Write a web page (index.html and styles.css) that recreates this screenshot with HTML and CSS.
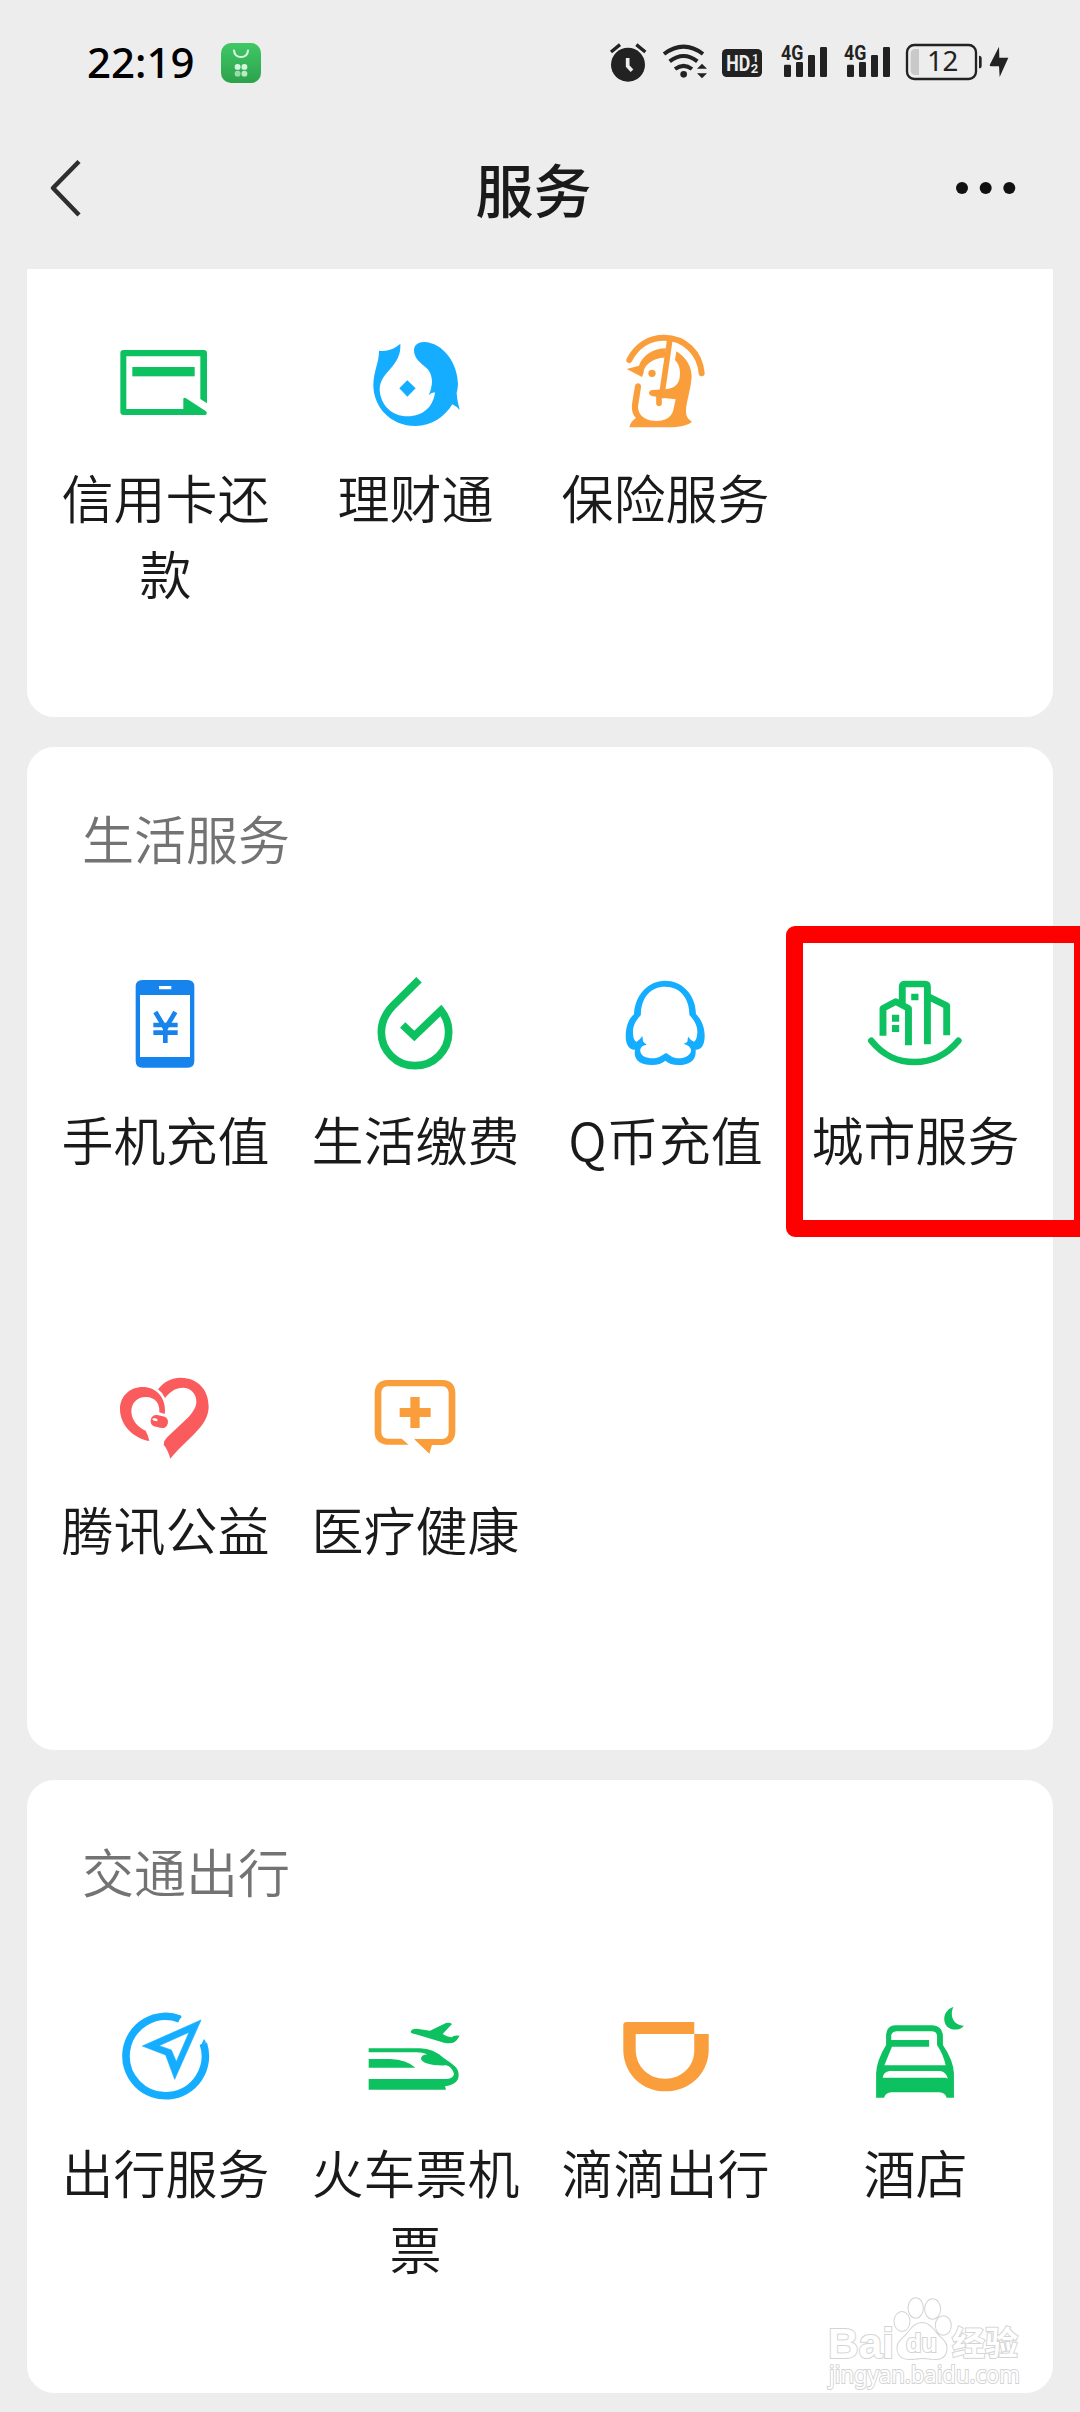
FILE: index.html
```html
<!DOCTYPE html>
<html lang="zh-CN">
<head>
<meta charset="utf-8">
<title>服务</title>
<link rel="stylesheet" href="styles.css">
</head>
<body>
<div class="page">
  <div class="statusbar">
    <span class="clock">22:19</span>
    <svg class="app-badge" width="40" height="40" viewBox="0 0 40 40">
      <defs><linearGradient id="badge" x1="0" y1="0" x2="0" y2="1"><stop offset="0" stop-color="#3fc866"/><stop offset="1" stop-color="#2ba24b"/></linearGradient></defs>
      <rect width="40" height="40" rx="10" fill="url(#badge)"/>
      <path d="M13 7.500C13.500 12 16 14 20 14S26.500 12 27 7.500" fill="none" stroke="#d9f5df" stroke-width="2.200" stroke-linecap="round"/>
      <g fill="#d3f5db"><rect x="13.700" y="21" width="5.800" height="5.800" rx="2.600"/><rect x="20.500" y="21" width="5.800" height="5.800" rx="2.600"/><rect x="13.700" y="27.800" width="5.800" height="5.800" rx="2.600" opacity=".65"/><rect x="20.500" y="27.800" width="5.800" height="5.800" rx="2.600" opacity=".85"/></g>
    </svg>
    <div class="indicators">
      <svg width="38" height="45" viewBox="87 120 114 135">
        <circle cx="144" cy="194" r="51"/><path d="M93 156l27-22M169 134l27 22" class="line" stroke-width="10"/>
        <path d="M143 174v24l13 14" class="line light" stroke-width="11"/>
      </svg>
      <svg width="43" height="45" viewBox="249 120 129 135">
        <path d="M252 162Q311 118 369 162M269 184Q311 152 352 184M285 207Q311 188 336 207" class="line" stroke-width="12"/>
        <circle cx="311" cy="223" r="10"/><path d="M351 206l15-15 15 15zM351 220h30l-15 15z"/>
      </svg>
      <svg width="43" height="45" viewBox="426 120 129 135">
        <rect x="426" y="147" width="120" height="84" rx="14"/>
        <text x="439" y="212" class="mini light-text" font-size="66" textLength="72" lengthAdjust="spacingAndGlyphs">HD</text>
        <text x="516" y="185" class="mini light-text" font-size="35">1</text><text x="512" y="220" class="mini light-text" font-size="39">2</text>
      </svg>
      <svg width="47" height="45" viewBox="603 120 141 135">
        <text x="603" y="180" class="mini" font-size="60" textLength="67" lengthAdjust="spacingAndGlyphs">4G</text>
        <rect x="612" y="194" width="21" height="37" rx="4"/><rect x="648" y="186" width="21" height="45" rx="4"/><rect x="684" y="165" width="21" height="66" rx="4"/><rect x="720" y="141" width="21" height="90" rx="4"/>
      </svg>
      <svg width="46" height="45" viewBox="603 120 138 135">
        <text x="603" y="180" class="mini" font-size="60" textLength="67" lengthAdjust="spacingAndGlyphs">4G</text>
        <rect x="612" y="194" width="21" height="37" rx="4"/><rect x="648" y="186" width="21" height="45" rx="4"/><rect x="684" y="165" width="21" height="66" rx="4"/><rect x="720" y="141" width="21" height="90" rx="4"/>
      </svg>
      <svg width="104" height="45" viewBox="978 120 312 135">
        <rect x="981" y="135" width="207" height="102" rx="22" class="line" stroke-width="7"/>
        <path d="M1017 147v78h-10q-15 0-15-15v-48q0-15 15-15z" fill="#c9c9c9"/>
        <text x="1041" y="214" class="charge" font-size="83" textLength="94">12</text>
        <path d="M1197 167q8 0 8 8v22q0 8-8 8zM1257 140l-28 55q0 4 5 4h23l2 32 26-58h-27z"/>
      </svg>
    </div>
  </div>

  <div class="navbar">
    <svg class="back" width="36" height="60" viewBox="0 0 36 60"><path d="M31 3.500L5 30l26 27" fill="none" stroke="#2e2e2e" stroke-width="4.500" stroke-linejoin="round"/></svg>
    <h1 class="nav-title">服务</h1>
    <svg class="more" width="60" height="14" viewBox="0 0 60 14"><circle cx="6" cy="7" r="6"/><circle cx="29.700" cy="7" r="6"/><circle cx="53.300" cy="7" r="6"/></svg>
  </div>

  <section class="card card-first">
    <div class="grid">
      <div class="item">
        <svg class="icon green" viewBox="255 36 360 360">
          <path d="M561 280V130q0-10-10-10H311q-10 0-10 10v176q0 9 10 9h242q12 0 5-11l-60-39q-8-4-8 3v29H319V139h222v128z"/><rect x="337" y="171" width="187" height="28"/>
        </svg>
        <span class="label">信用卡还款</span>
      </div>
      <div class="item">
        <svg class="icon sky" viewBox="1005 36 360 360">
          <path d="M1077 122Q1112 127 1141 101C1143 135 1130 155 1108 180C1090 200 1079 215 1079 240C1082 285 1115 319 1163 319C1210 319 1240 290 1245 247Q1235 248 1226 255C1232 245 1236 225 1236 213C1235 195 1230 182 1215 170C1195 155 1182 140 1182 121C1182 105 1195 96 1212 96C1270 98 1313 160 1314 222Q1313 240 1310 250C1311 270 1316 285 1319 300Q1308 288 1297 283C1275 320 1235 348 1187 348C1110 348 1060 290 1060 225C1060 185 1078 155 1077 122Z"/>
          <path d="M1138 235l24-24 25 24-25 25z"/>
        </svg>
        <span class="label">理财通</span>
      </div>
      <div class="item">
        <svg class="icon orange" viewBox="255 36 360 360">
          <path d="M328 150C350 105 390 83 432 83C495 83 540 130 545 190" class="line" stroke-width="18" stroke-linecap="round"/>
          <path d="M450 86L424 264" class="line" stroke-width="17"/><path d="M417 262v18" class="line" stroke-width="17" stroke-linecap="round"/>
          <path d="M320 177L357 167C368 135 400 115 438 115L434 143C400 143 371 165 371 188L366 201Z"/>
          <path d="M469 124C500 142 515 172 515 200C512 240 500 270 498 300C497 320 505 328 516 335C500 350 460 352 440 352H328C331 338 338 330 348 324C336 312 334 295 337 275L345 228C347 216 365 218 363 232L354 290C354 318 380 333 410 333C440 333 458 318 461 295L467 268L432 264L395 258C383 254 385 241 397 240L435 238C465 236 480 222 480 190C480 172 475 160 465 150Z"/>
          <circle cx="396" cy="190" r="11"/>
        </svg>
        <span class="label">保险服务</span>
      </div>
    </div>
  </section>

  <section class="card">
    <h2 class="section-title">生活服务</h2>
    <div class="grid">
      <div class="item">
        <svg class="icon blue" viewBox="255 732 360 360">
          <path fill-rule="evenodd" d="M367 780h136q20 0 20 20v223q0 20-20 20H367q-20 0-20-20V800q0-20 20-20zM360 825v186h150V825zM417 798v10h37v-10z"/>
          <path d="M406 876l30 50 30-50M400 915h73M400 938h73M436 915v54" class="line" stroke-width="14"/>
        </svg>
        <span class="label">手机充值</span>
      </div>
      <div class="item">
        <svg class="icon green" viewBox="1005 732 360 360">
          <path d="M1197 779L1118 858C1095 882 1084 905 1084 937A101 100 0 0 0 1185 1037A101 100 0 0 0 1286 937C1286 912 1278 890 1263 871L1183 948L1148 915" class="line" stroke-width="23"/>
        </svg>
        <span class="label">生活缴费</span>
      </div>
      <div class="item">
        <svg class="icon sky" viewBox="188.800 192 348.500 360" preserveAspectRatio="none">
          <path fill-rule="evenodd" d="M363 242C410 242 452 280 453 342C470 360 480 385 478 415C476 440 466 450 452 449C455 480 435 495 402 495C385 495 373 490 364 482C355 490 342 495 325 495C290 495 270 478 276 449C256 450 249 430 249 408C249 380 258 355 273 343C275 285 315 242 363 242ZM363 260C322 260 293 292 293 345C280 360 270 375 270 395C270 412 275 425 281 425Q290 420 297 408L300 425L310 434Q292 437 291 450C291 468 308 475 328 475C345 475 355 465 366 459C377 465 385 475 403 475C423 475 438 465 439 450Q436 437 418 432L428 425L430 410Q437 420 447 425C453 422 457 410 457 395C457 375 447 360 434 345C434 295 408 260 363 260Z"/>
        </svg>
        <span class="label">Q币充值</span>
      </div>
      <div class="item">
        <svg class="icon green" viewBox="914.700 192 348.500 360" preserveAspectRatio="none">
          <path d="M996 407V325L1033 305L1070 325V436M1052 312V258Q1053 252 1060 252H1118Q1125 252 1125 260V433M1130 291L1181 317V406" class="line" stroke-width="20" stroke-linejoin="round"/>
          <path d="M1078 281h21v20h-21zM1022 344h21v21h-21zM1022 375h21v21h-21z"/>
          <path d="M962 422C1000 470 1040 486 1088 486C1135 486 1180 465 1215 422" class="line" stroke-width="19" stroke-linecap="round"/>
        </svg>
        <span class="label">城市服务</span>
      </div>
      <div class="item">
        <svg class="icon red" viewBox="255 42 360 360">
          <path d="M414 148C432 125 455 113 482 113C535 114 566 150 566 200C565 260 505 290 451 356Q444 330 431 314Q432 300 440 293L505 232C520 215 529 200 529 185C529 160 512 143 488 143C468 143 450 155 435 174Q428 158 414 148Z"/>
          <path d="M388 303C340 295 300 255 300 207C300 168 330 141 368 141C408 141 436 172 435 212L434 222L418 217C420 190 405 171 378 171C350 171 334 190 334 215C335 240 352 260 377 272Q384 285 388 303Z"/>
          <rect x="392" y="227" width="52" height="35" rx="16" transform="rotate(12 418 244)"/><ellipse cx="405" cy="239" rx="8" ry="4" fill="#fff" transform="rotate(12 405 239)"/>
        </svg>
        <span class="label">腾讯公益</span>
      </div>
      <div class="item">
        <svg class="icon orange" viewBox="1005 42 360 360">
          <path d="M1166 314H1100Q1064 310 1064 276V158Q1066 122 1102 120H1268Q1305 122 1306 158V276Q1304 312 1268 315H1236L1228 341L1182 297H1268Q1285 295 1286 276V158Q1284 140 1268 139H1102Q1085 140 1084 158V276Q1085 295 1102 296H1145Z"/>
          <path d="M1171 171h28v33h33v27h-33v33h-28v-33h-32v-27h32z"/>
        </svg>
        <span class="label">医疗健康</span>
      </div>
    </div>
    <div class="highlight"></div>
  </section>

  <section class="card">
    <h2 class="section-title">交通出行</h2>
    <div class="grid">
      <div class="item">
        <svg class="icon sky" viewBox="255 51 360 360">
          <path d="M479 117A119 119 0 1 0 550 191" class="line" stroke-width="23"/>
          <path fill-rule="evenodd" d="M543 120L367 198L437 225L464 298ZM507 157L417 197L454 210L469 245Z" stroke="currentColor" stroke-width="2" stroke-linejoin="round"/>
          <path d="M475 106l11 4-11 12zM552 177l6 10-16 10z"/>
        </svg>
        <span class="label">出行服务</span>
      </div>
      <div class="item">
        <svg class="icon green" viewBox="1005 51 360 360">
          <path d="M1172 155Q1174 146 1190 146L1230 152L1278 129Q1290 127 1296 132L1268 162Q1285 172 1296 172Q1300 164 1319 167Q1312 180 1303 187Q1290 192 1272 188L1185 162Q1172 160 1172 155Z"/>
          <path d="M1046 205H1200Q1240 205 1272 235C1300 255 1316 262 1316 285C1316 305 1300 316 1275 319L1278 329H1046V297H1280Q1300 295 1302 283C1300 270 1290 258 1278 256Q1215 258 1203 238Q1202 225 1222 223Q1205 216 1185 217H1046Z"/>
          <path d="M1046 237H1110Q1160 239 1186 263H1046Z"/>
        </svg>
        <span class="label">火车票机票</span>
      </div>
      <div class="item">
        <svg class="icon orange" viewBox="188.800 51 348.500 360" preserveAspectRatio="none">
          <path d="M242 136Q242 126 252 126H448V162H278V212C280 260 315 296 364 296C410 296 448 260 448 212V162H490V212C488 285 430 334 364 334C300 334 244 285 242 212Z"/>
        </svg>
        <span class="label">滴滴出行</span>
      </div>
      <div class="item">
        <svg class="icon green" viewBox="914.700 51 348.500 360" preserveAspectRatio="none">
          <path d="M1201 80C1190 100 1196 135 1231 137C1222 150 1200 152 1188 144C1172 135 1170 110 1180 96Q1188 84 1201 80Z"/>
          <path fill-rule="evenodd" d="M1005 195V165Q1007 136 1032 136H1140Q1167 138 1170 165V195Q1200 240 1202 280V353H1181Q1176 338 1160 337H1020Q1004 338 999 353H976V280Q978 240 1005 195ZM1020 180H1130V200H1022L1000 256H1178Q1172 225 1153 195V165Q1150 154 1138 154H1035Q1022 155 1020 165ZM995 293Q998 275 1015 273H1162Q1180 276 1184 296L1178 293Z"/>
        </svg>
        <span class="label">酒店</span>
      </div>
    </div>
    <svg class="watermark" width="210" height="102" viewBox="820 2290 210 102">
      <g class="mark">
        <text x="828" y="2357" class="brand" font-size="43" textLength="66" lengthAdjust="spacingAndGlyphs">Bai</text>
        <path d="M922 2322C931 2322 934 2331 941 2337C950 2344 948 2358 936 2358C928 2358 926 2357 922 2357S915 2358 909 2358C896 2358 894 2344 903 2337C910 2331 913 2322 922 2322Z"/>
        <ellipse cx="915.700" cy="2307" rx="7.200" ry="9.700"/><ellipse cx="932.600" cy="2308" rx="7.500" ry="9.700"/><ellipse cx="902" cy="2320.500" rx="7.500" ry="9.500"/><ellipse cx="943.300" cy="2324.500" rx="7.500" ry="9.300"/>
        <text x="906" y="2351" class="brand" font-size="25" textLength="31" lengthAdjust="spacingAndGlyphs">du</text>
        <text x="952" y="2354" class="cjk-mark" font-size="33">经验</text>
        <text x="829" y="2382" class="url" font-size="24" textLength="191" lengthAdjust="spacingAndGlyphs">jingyan.baidu.com</text>
      </g>
    </svg>
  </section>
</div>
</body>
</html>
```
FILE: styles.css
```css
* { box-sizing: border-box; }

body {
  margin: 0;
  background: #ededed;
  font-family: "Noto Sans CJK SC", sans-serif;
  color: #1a1a1a;
}

svg { display: block; flex: none; overflow: visible; }

.page {
  width: 1080px;
  height: 2412px;
  overflow: hidden;
}

/* status bar */
.statusbar {
  display: flex;
  align-items: center;
  height: 124px;
  padding: 1px 70px 0 87px;
}

.clock {
  width: 134px;
  margin-top: -2px;
  font: 500 42px/60px "Noto Sans", sans-serif;
  color: #000;
}

.indicators {
  display: flex;
  gap: 16px;
  margin-left: auto;
  fill: #222;
  color: #222;
}

.line { fill: none; stroke: currentColor; }
.light { stroke: #ededed; }
.mini { font-family: Roboto, sans-serif; font-weight: 700; }
.light-text { fill: #ededed; }
.charge { font-family: "Noto Sans", sans-serif; }

/* title bar */
.navbar {
  display: flex;
  align-items: center;
  height: 145px;
  padding: 0 64px 17px 48px;
}

.back { margin-right: 36px; }

.nav-title {
  flex: 1;
  margin: 0;
  font-size: 58px;
  line-height: 84px;
  font-weight: 500;
  text-align: center;
}

.more { margin-left: 9px; fill: #111; }

/* cards */
.card {
  position: relative;
  margin: 0 27px 30px;
  padding: 53px 13px 6px;
  border-radius: 27px;
  background: #fff;
}

.card-first {
  padding-bottom: 5px;
  border-radius: 0 0 27px 27px;
}

.section-title {
  margin: 0 0 88px;
  padding-left: 42px;
  font-size: 52px;
  line-height: 76px;
  font-weight: 350;
  color: #737373;
}

.grid {
  display: grid;
  grid-template-columns: repeat(4, 250px);
  grid-auto-rows: 390px;
}

.item {
  display: flex;
  flex-direction: column;
  align-items: center;
  gap: 17px;
}

.icon { width: 120px; height: 120px; fill: currentColor; }
.green { color: #0dc160; }
.sky { color: #15adff; }
.blue { color: #1784ee; }
.orange { color: #fa9e3b; }
.red { color: #fa5b5d; }

.label {
  width: 250px;
  padding-left: 1px;
  font-size: 52px;
  line-height: 75.5px;
  font-weight: 350;
  text-align: center;
}

.highlight {
  position: absolute;
  left: 758.5px;
  top: 178.5px;
  width: 305px;
  height: 311px;
  border: 17.5px solid #f00;
  border-radius: 9px;
}

.watermark {
  position: absolute;
  left: 793px;
  bottom: 0;
}

.mark {
  fill: #fff;
  stroke: #d4d4d4;
  stroke-width: 2px;
  paint-order: stroke;
}

.brand { font-family: "Liberation Sans", sans-serif; font-weight: 700; }
.cjk-mark { font-family: "Noto Sans CJK SC", sans-serif; font-weight: 700; }
.url { font-family: "Noto Sans", sans-serif; }
```
